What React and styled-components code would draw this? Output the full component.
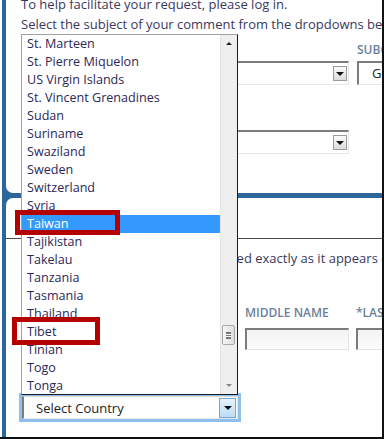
import React from "react";
import styled, { createGlobalStyle } from "styled-components";

const GlobalStyle = createGlobalStyle`
    body {
        margin: 0;
        background: white;
        font-family: "Open Sans", "Liberation Sans", sans-serif;
    }
`;

const countries = [
    "St. Marteen", "St. Pierre Miquelon", "US Virgin Islands", "St. Vincent Grenadines",
    "Sudan", "Suriname", "Swaziland", "Sweden", "Switzerland", "Syria", "Taiwan",
    "Tajikistan", "Takelau", "Tanzania", "Tasmania", "Thailand", "Tibet", "Tinian",
    "Togo", "Tonga",
];

const Frame = styled.div`
    position: relative;
    width: 384px;
    height: 439px;
    box-sizing: border-box;
    border-right: 2px solid #111;
    border-bottom: 2px solid #111;
    padding-left: 2px;
    overflow: hidden;
    background: white;
`;

const Column = styled.div`
    height: 100%;
    background: #2b669c;
    padding-left: 4px;
    display: flex;
    flex-direction: column;
`;

const TopPanel = styled.div`
    height: 193px;
    background: white;
    border-bottom-left-radius: 7px;
    padding-left: 15px;
    overflow: hidden;
    flex-shrink: 0;
`;

const BottomPanel = styled.div`
    flex: 1;
    margin-top: 5px;
    background: white;
    border-top-left-radius: 7px;
    overflow: hidden;
`;

const Intro = styled.p`
    margin: -6px 0 0;
    font-size: 13px;
    line-height: 20px;
    color: #3a385e;
    white-space: nowrap;
`;

const FieldGrid = styled.div`
    display: grid;
    grid-template-columns: ${p => p.$cols};
    column-gap: ${p => p.$gap || 8}px;
    margin-top: ${p => p.$top}px;
`;

const Label = styled.div`
    font-size: 12px;
    line-height: 16px;
    font-weight: 600;
    color: #6b7f99;
    white-space: nowrap;
    margin-bottom: ${p => p.$below || 3}px;
`;

const SelectBox = styled.div`
    position: relative;
    height: 24px;
    box-sizing: border-box;
    border: 1px solid #e6e6e6;
    border-top: 2px solid #7c7c7c;
    border-left: 2px solid #7c7c7c;
    background: white;
    font-size: 13px;
    line-height: 21px;
    color: #222;
    padding-left: 13px;
    white-space: nowrap;
`;

const DropButton = styled.div`
    position: absolute;
    right: 1px;
    top: 3px;
    width: 14px;
    height: 15px;
    box-sizing: border-box;
    border: 1px solid #9a9a9a;
    background: ${p => (p.$focus ? "linear-gradient(#e6f3fd, #bcdcf6)" : "linear-gradient(#fafafa, #dcdcdc)")};
    display: flex;
    align-items: center;
    justify-content: center;
    &::after {
        content: "";
        border-left: 4px solid transparent;
        border-right: 4px solid transparent;
        border-top: 4px solid #111;
    }
`;

const SectionHead = styled.div`
    height: 40px;
    border-bottom: 1px solid #4a4a4a;
`;

const SectionBody = styled.div`
    padding: 10px 0 0 16px;
`;

const Para = styled.div`
    font-size: 13px;
    line-height: 18px;
    color: #3a385e;
    white-space: nowrap;
`;

const TextInput = styled.div`
    height: 22px;
    box-sizing: border-box;
    border: 1px solid #e4e4e4;
    border-top: 2px solid #7c7c7c;
    border-left: 2px solid #7c7c7c;
    background: linear-gradient(#f4f4f4, #fbfbfb);
`;

const CountrySelect = styled(SelectBox)`
    height: 23px;
    width: 216px;
    border-top: 1px solid #d8d8d8;
    box-shadow: 0 0 0 3px #8ec0ee;
    padding-left: 12px;
    line-height: 22px;
    & > div {
        top: 1px;
        height: 20px;
        width: 17px;
        border-color: #7aa7d0;
    }
`;

const DropList = styled.div`
    position: absolute;
    left: 21px;
    top: 34px;
    width: 217px;
    height: 361px;
    box-sizing: border-box;
    border: 1px solid #a0a0a0;
    border-right-color: #1c1c1c;
    border-bottom-color: #1c1c1c;
    background: white;
    display: flex;
`;

const Items = styled.div`
    flex: 1;
    overflow: hidden;
`;

const Item = styled.div`
    height: 18px;
    line-height: 18px;
    padding-left: 5px;
    font-size: 12.6px;
    color: ${p => (p.$selected ? "white" : "#2c2857")};
    background: ${p => (p.$selected ? "#3399ff" : "transparent")};
    white-space: nowrap;
`;

const ScrollBar = styled.div`
    width: 16px;
    background: #efefef;
    border-left: 1px solid #e4e4e4;
    display: flex;
    flex-direction: column;
`;

const Arrow = styled.div`
    height: 17px;
    display: flex;
    align-items: center;
    justify-content: center;
    &::after {
        content: "";
        border-left: 3px solid transparent;
        border-right: 3px solid transparent;
        ${p => (p.$down
            ? "border-top: 3px solid #8a8a8a;"
            : "border-bottom: 3px solid #222;")}
    }
`;

const Track = styled.div`
    flex: 1;
`;

const Thumb = styled.div`
    width: 13px;
    height: 20px;
    margin-left: 1px;
    box-sizing: border-box;
    border: 1px solid #a8a8a8;
    border-radius: 2px;
    background: linear-gradient(90deg, #f6f6f6, #dedede);
    display: flex;
    align-items: center;
    justify-content: center;
    &::after {
        content: "";
        width: 5px;
        height: 5px;
        border-top: 1px solid #777;
        border-bottom: 1px solid #777;
        background: linear-gradient(#fff 0 1px, #777 1px 2px, #fff 2px);
        background-size: 100% 2px;
        background-repeat: repeat-y;
        background-position: 0 1px;
    }
`;

const Mark = styled.div`
    position: absolute;
    left: ${p => p.$x}px;
    top: ${p => p.$y}px;
    width: ${p => p.$w}px;
    height: ${p => p.$h}px;
    box-sizing: border-box;
    border: 5px solid #b50000;
`;

const App = () => {
    const scrollOffset = 273;
    return (
        <Frame>
            <GlobalStyle />
            <Column>
                <TopPanel>
                    <Intro>
                        To help facilitate your request, please log in.<br />
                        Select the subject of your comment from the dropdowns below.
                    </Intro>
                    <FieldGrid $cols="328px 1fr" $top={8}>
                        <div>
                            <Label>*TOPIC</Label>
                            <SelectBox><DropButton /></SelectBox>
                        </div>
                        <div>
                            <Label>SUBCATEGORY</Label>
                            <SelectBox>General</SelectBox>
                        </div>
                    </FieldGrid>
                    <FieldGrid $cols="328px" $top={26}>
                        <div>
                            <Label>*CATEGORY</Label>
                            <SelectBox><DropButton /></SelectBox>
                        </div>
                    </FieldGrid>
                </TopPanel>
                <BottomPanel>
                    <SectionHead />
                    <SectionBody>
                        <Para>Please confirm your name is recorded exactly as it appears on your ID.</Para>
                        <Para>Eligible names only.</Para>
                        <FieldGrid $cols="216px 104px 1fr" $gap={7} $top={20}>
                            <div>
                                <Label $below={7}>*FIRST NAME</Label>
                                <TextInput />
                            </div>
                            <div>
                                <Label $below={7}>MIDDLE NAME</Label>
                                <TextInput />
                            </div>
                            <div>
                                <Label $below={7}>*LAST NAME</Label>
                                <TextInput />
                            </div>
                        </FieldGrid>
                        <FieldGrid $cols="216px" $top={22}>
                            <div>
                                <Label $below={8}>*COUNTRY</Label>
                                <CountrySelect>
                                    Select Country
                                    <DropButton $focus />
                                </CountrySelect>
                            </div>
                        </FieldGrid>
                    </SectionBody>
                </BottomPanel>
            </Column>
            <DropList>
                <Items>
                    {countries.map(c => (
                        <Item key={c} $selected={c === "Taiwan"}>{c}</Item>
                    ))}
                </Items>
                <ScrollBar>
                    <Arrow />
                    <Track>
                        <Thumb style={{ marginTop: scrollOffset }} />
                    </Track>
                    <Arrow $down />
                </ScrollBar>
            </DropList>
            <Mark $x={15} $y={210} $w={105} $h={25} />
            <Mark $x={12} $y={317} $w={88} $h={28} />
        </Frame>
    );
};

export default App;
